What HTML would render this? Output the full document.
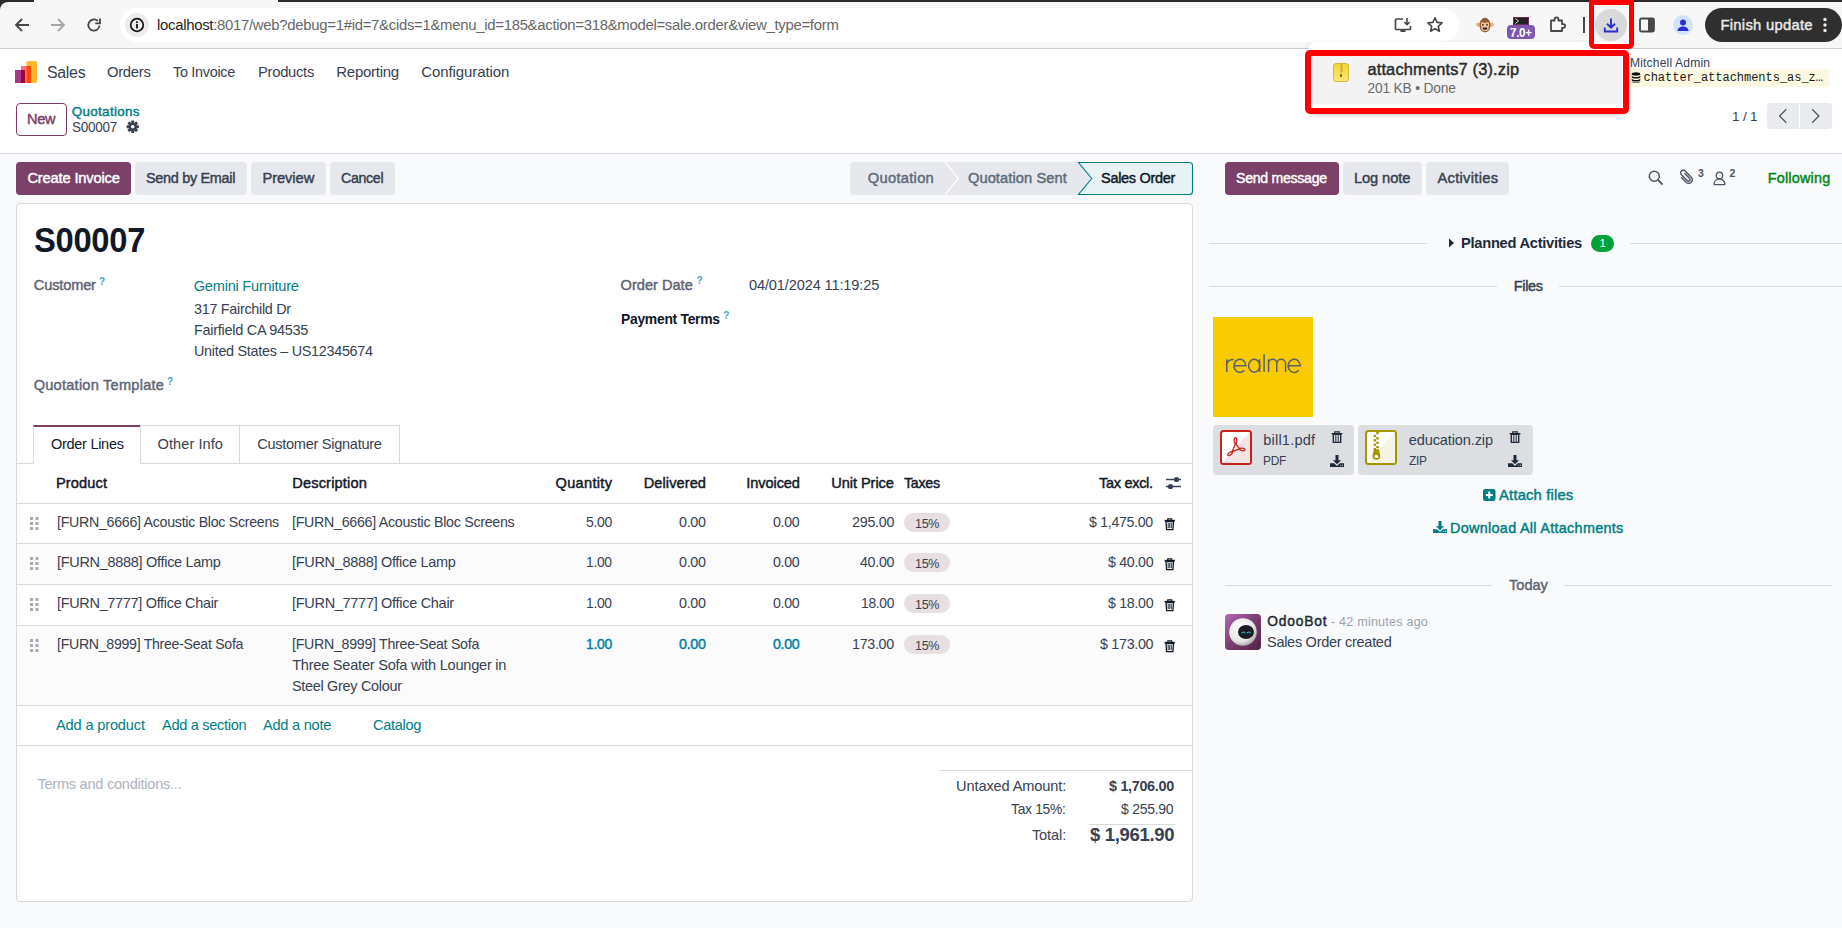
<!DOCTYPE html>
<html><head><meta charset="utf-8"><style>
html,body{margin:0;padding:0;width:1842px;height:928px;overflow:hidden;background:#f9fafb;}
body>div{position:absolute;white-space:pre;box-sizing:border-box;}
</style></head><body>
<div style="left:0px;top:0px;width:1842px;height:48px;background:#f7f7f7;"></div>
<div style="left:0px;top:0px;width:1842px;height:2px;background:#2c2c2c;"></div>
<div style="left:0px;top:0px;width:9px;height:10px;background:#2c2c2c;"></div>
<div style="left:0px;top:2px;width:40px;height:20px;background:#f7f7f7;border-top-left-radius:8px;"></div>
<div style="left:34px;top:0px;width:244px;height:2px;background:#f7f7f7;border-radius:0 0 0 0;"></div>
<div style="left:0px;top:48px;width:1842px;height:1px;background:#cfcfcf;"></div>
<div style="left:120px;top:8px;width:1339px;height:34px;background:#ffffff;border-radius:17px;"></div>
<div style="left:125px;top:13px;width:24px;height:24px;background:#ececec;border-radius:12px;"></div>
<svg style="position:absolute;left:14px;top:17px;" width="16" height="16" viewBox="0 0 16 16"><path d="M15 8H2.5M8 2L2 8l6 6" fill="none" stroke="#474747" stroke-width="1.8"/></svg>
<svg style="position:absolute;left:50px;top:17px;" width="16" height="16" viewBox="0 0 16 16"><path d="M1 8h12.5M8 2l6 6-6 6" fill="none" stroke="#a6a6a6" stroke-width="1.8"/></svg>
<svg style="position:absolute;left:86px;top:17px;" width="16" height="16" viewBox="0 0 16 16"><path d="M13.5 8.5A5.6 5.6 0 1 1 11.8 4" fill="none" stroke="#474747" stroke-width="1.8"/><path d="M14 1.5v4.8H9.2" fill="none" stroke="#474747" stroke-width="1.8"/></svg>
<svg style="position:absolute;left:129px;top:17px;" width="16" height="16" viewBox="0 0 16 16"><circle cx="8" cy="8" r="6.3" fill="none" stroke="#111" stroke-width="1.7"/><rect x="7.1" y="7" width="1.8" height="4.5" fill="#111"/><rect x="7.1" y="4.3" width="1.8" height="1.8" fill="#111"/></svg>
<div style="left:157.40px;top:17.00px;font-family:'Liberation Sans', sans-serif;font-size:15.4px;line-height:15.4px;font-weight:normal;color:#676767;letter-spacing:-0.300px;transform:scaleX(0.9679);transform-origin:0.00px 0;"><span style="color:#1f1f1f">localhost</span>:8017/web?debug=1#id=7&amp;cids=1&amp;menu_id=185&amp;action=318&amp;model=sale.order&amp;view_type=form</div>
<svg style="position:absolute;left:1394px;top:17px;" width="18" height="16" viewBox="0 0 18 16"><path d="M9 2H2.5a1 1 0 0 0-1 1v8.5a1 1 0 0 0 1 1h13a1 1 0 0 0 1-1V9" fill="none" stroke="#474747" stroke-width="1.7"/><rect x="6.5" y="13" width="5" height="2" fill="#474747"/><path d="M13 1v6.5M10.3 5l2.7 2.7L15.7 5" fill="none" stroke="#474747" stroke-width="1.6"/></svg>
<svg style="position:absolute;left:1426px;top:16px;" width="18" height="17" viewBox="0 0 18 17"><path d="M9 1.8l2.1 4.6 5 .5-3.8 3.4 1.1 4.9L9 12.6l-4.4 2.6 1.1-4.9L1.9 6.9l5-.5z" fill="none" stroke="#474747" stroke-width="1.6" stroke-linejoin="round"/></svg>
<svg style="position:absolute;left:1476px;top:17px;" width="18" height="16" viewBox="0 0 18 16"><circle cx="2.4" cy="7.6" r="2.2" fill="#e9ad7c"/><circle cx="15.6" cy="7.6" r="2.2" fill="#e9ad7c"/><path d="M9 0.8C5.5 1.5 3.6 4 3.6 8.5c0 4 2.3 6.8 5.4 6.8s5.4-2.8 5.4-6.8C14.4 4 12.5 1.5 9 .8z" fill="#8f5b3b"/><path d="M5.2 5.6c1.2-.7 2.6-.5 3.8.3 1.2-.8 2.6-1 3.8-.3.6 2.2.2 3.8-.3 4.6.6 1.6.2 3.6-3.5 3.9-3.7-.3-4.1-2.3-3.5-3.9-.5-.8-.9-2.4-.3-4.6z" fill="#f5c491"/><rect x="6.2" y="6.7" width="1.5" height="2" rx=".7" fill="#1c2340"/><rect x="10.3" y="6.7" width="1.5" height="2" rx=".7" fill="#1c2340"/><rect x="6.8" y="10.6" width="4.4" height="2" rx=".6" fill="#1c2340"/><rect x="7.4" y="11.7" width="3.2" height="0.9" fill="#b0203a"/></svg>
<div style="left:1513px;top:17px;width:16px;height:8px;background:#222;border:1px solid #6d2a5a;"></div>
<svg style="position:absolute;left:1514px;top:17px;" width="8" height="8" viewBox="0 0 8 8"><path d="M1.5 1.5l3 2.5-3 2.5" fill="none" stroke="#ddd" stroke-width="1"/></svg>
<div style="left:1507px;top:25px;width:28px;height:14px;background:#7e57b3;border-radius:4px;"></div>
<div style="left:1510.00px;top:27.00px;font-family:'Liberation Sans', sans-serif;font-size:12px;line-height:12px;font-weight:bold;color:#ffffff;letter-spacing:-0.300px;transform:scaleX(0.9654);transform-origin:0.00px 0;">7.0+</div>
<svg style="position:absolute;left:1548px;top:15px;" width="20" height="19" viewBox="0 0 20 19"><path d="M3 5.5h3.6V4.2a1.9 1.9 0 0 1 3.8 0v1.3H14v3.6h1.2a1.9 1.9 0 0 1 0 3.8H14V16H3z" fill="none" stroke="#474747" stroke-width="1.8" stroke-linejoin="round"/></svg>
<div style="left:1583px;top:17px;width:2px;height:16px;background:#474747;"></div>
<div style="left:1595px;top:9px;width:32px;height:32px;background:#d9d9d9;border-radius:16px;"></div>
<svg style="position:absolute;left:1603px;top:17px;" width="16" height="16" viewBox="0 0 16 16"><path d="M8 1.5v9M4 6.8l4 3.9 4-3.9" fill="none" stroke="#2a2ed0" stroke-width="1.9"/><path d="M1.8 10.5v4h12.4v-4" fill="none" stroke="#2a2ed0" stroke-width="1.9"/></svg>
<svg style="position:absolute;left:1639px;top:17px;" width="16" height="16" viewBox="0 0 16 16"><rect x="1" y="1.5" width="14" height="13" rx="1.5" fill="none" stroke="#474747" stroke-width="1.8"/><rect x="9" y="1.5" width="6" height="13" fill="#474747"/></svg>
<div style="left:1673px;top:15px;width:20px;height:20px;background:#d3e3fd;border-radius:10px;"></div>
<svg style="position:absolute;left:1673px;top:15px;" width="20" height="20" viewBox="0 0 20 20"><circle cx="10" cy="7.6" r="3" fill="#2a2ed0"/><path d="M4.5 16c0-3 2.5-4.6 5.5-4.6s5.5 1.6 5.5 4.6z" fill="#2a2ed0"/></svg>
<div style="left:1705px;top:8px;width:137px;height:34px;background:#2f2f2f;border-radius:17px;"></div>
<div style="left:1720.50px;top:18.00px;font-family:'Liberation Sans', sans-serif;font-size:14.8px;line-height:14.8px;font-weight:normal;color:#e8e8e8;letter-spacing:0.270px;-webkit-text-stroke:0.45px #e8e8e8;">Finish update</div>
<svg style="position:absolute;left:1821px;top:17px;" width="8" height="16" viewBox="0 0 8 16"><circle cx="4" cy="2.5" r="1.7" fill="#eee"/><circle cx="4" cy="8" r="1.7" fill="#eee"/><circle cx="4" cy="13.5" r="1.7" fill="#eee"/></svg>
<div style="left:0px;top:49px;width:1842px;height:105px;background:#ffffff;"></div>
<svg style="position:absolute;left:15px;top:60px;" width="23" height="24" viewBox="0 0 23 24"><rect x="11.4" y="1" width="10.7" height="22" rx="1.2" fill="#ffb833"/><rect x="6" y="6" width="5.4" height="17" fill="#ff6d80"/><rect x="11.4" y="6" width="4.6" height="17" fill="#ff4500"/><rect x="0" y="10" width="6" height="13" fill="#a53a8c"/><rect x="6" y="10" width="4" height="13" fill="#a5003d"/></svg>
<div style="left:47.40px;top:64.00px;font-family:'Liberation Sans', sans-serif;font-size:17.3px;line-height:17.3px;font-weight:normal;color:#374151;letter-spacing:-0.300px;transform:scaleX(0.9176);transform-origin:0.00px 0;">Sales</div>
<div style="left:107.20px;top:64.00px;font-family:'Liberation Sans', sans-serif;font-size:15px;line-height:15px;font-weight:normal;color:#374151;letter-spacing:-0.300px;transform:scaleX(0.9878);transform-origin:0.00px 0;">Orders</div>
<div style="left:172.70px;top:64.00px;font-family:'Liberation Sans', sans-serif;font-size:15px;line-height:15px;font-weight:normal;color:#374151;letter-spacing:-0.300px;transform:scaleX(0.9610);transform-origin:0.00px 0;">To Invoice</div>
<div style="left:257.70px;top:64.00px;font-family:'Liberation Sans', sans-serif;font-size:15px;line-height:15px;font-weight:normal;color:#374151;letter-spacing:-0.300px;transform:scaleX(0.9862);transform-origin:0.00px 0;">Products</div>
<div style="left:336.30px;top:64.00px;font-family:'Liberation Sans', sans-serif;font-size:15px;line-height:15px;font-weight:normal;color:#374151;letter-spacing:-0.268px;">Reporting</div>
<div style="left:421.30px;top:64.00px;font-family:'Liberation Sans', sans-serif;font-size:15px;line-height:15px;font-weight:normal;color:#374151;letter-spacing:-0.093px;">Configuration</div>
<div style="left:16px;top:103px;width:51px;height:33px;background:#ffffff;border:1px solid #7b4067;border-radius:4px;"></div>
<div style="left:27.40px;top:112.00px;font-family:'Liberation Sans', sans-serif;font-size:14.8px;line-height:14.8px;font-weight:normal;color:#7b4067;letter-spacing:-0.300px;transform:scaleX(0.9813);transform-origin:0.00px 0;-webkit-text-stroke:0.45px #7b4067;">New</div>
<div style="left:71.80px;top:105.00px;font-family:'Liberation Sans', sans-serif;font-size:13.4px;line-height:13.4px;font-weight:normal;color:#017e84;letter-spacing:0.322px;-webkit-text-stroke:0.45px #017e84;">Quotations</div>
<div style="left:71.80px;top:119.00px;font-family:'Liberation Sans', sans-serif;font-size:15px;line-height:15px;font-weight:normal;color:#374151;letter-spacing:-0.300px;transform:scaleX(0.9000);transform-origin:0.00px 0;">S00007</div>
<svg style="position:absolute;left:125.5px;top:120px;" width="13.5" height="13.5" viewBox="0 0 13.5 13.5"><g transform="translate(6.75 6.75) scale(0.93)" fill="#374151"><circle r="4.2"/><rect x="-1.6" y="-6.6" width="3.2" height="3.4" rx="0.6" transform="rotate(0)"/><rect x="-1.6" y="-6.6" width="3.2" height="3.4" rx="0.6" transform="rotate(45)"/><rect x="-1.6" y="-6.6" width="3.2" height="3.4" rx="0.6" transform="rotate(90)"/><rect x="-1.6" y="-6.6" width="3.2" height="3.4" rx="0.6" transform="rotate(135)"/><rect x="-1.6" y="-6.6" width="3.2" height="3.4" rx="0.6" transform="rotate(180)"/><rect x="-1.6" y="-6.6" width="3.2" height="3.4" rx="0.6" transform="rotate(225)"/><rect x="-1.6" y="-6.6" width="3.2" height="3.4" rx="0.6" transform="rotate(270)"/><rect x="-1.6" y="-6.6" width="3.2" height="3.4" rx="0.6" transform="rotate(315)"/><circle r="1.9" fill="#fff"/></g></svg>
<div style="left:0px;top:153px;width:1842px;height:1px;background:#d8dadd;"></div>
<div style="left:1629.90px;top:57.00px;font-family:'Liberation Sans', sans-serif;font-size:12.1px;line-height:12.1px;font-weight:normal;color:#374151;letter-spacing:0.169px;">Mitchell Admin</div>
<div style="left:1629px;top:69px;width:200px;height:18px;background:#fbf9e1;"></div>
<svg style="position:absolute;left:1631px;top:72px;" width="10" height="11" viewBox="0 0 10 11"><g fill="#111"><ellipse cx="5" cy="2" rx="4.3" ry="1.7"/><path d="M0.7 3.4c.6 1 2.3 1.5 4.3 1.5s3.7-.5 4.3-1.5V5c0 .9-1.9 1.6-4.3 1.6S0.7 5.9 0.7 5z"/><path d="M0.7 6.4c.6 1 2.3 1.5 4.3 1.5s3.7-.5 4.3-1.5V8c0 .9-1.9 1.6-4.3 1.6S0.7 8.9 0.7 8z"/><path d="M0.7 9c.6 1 2.3 1.4 4.3 1.4s3.7-.4 4.3-1.4v.3c0 .9-1.9 1.6-4.3 1.6S0.7 10.2 0.7 9.3z"/></g></svg>
<div style="left:1643.50px;top:72.00px;font-family:'Liberation Mono', monospace;font-size:12px;line-height:12px;font-weight:normal;color:#1a1a1a;letter-spacing:-0.022px;">chatter_attachments_as_z…</div>
<div style="left:1732.00px;top:110.00px;font-family:'Liberation Sans', sans-serif;font-size:13.4px;line-height:13.4px;font-weight:normal;color:#374151;letter-spacing:-0.144px;">1 / 1</div>
<div style="left:1767px;top:103px;width:32px;height:26px;background:#e9ebee;border-radius:4px 0 0 4px;"></div>
<div style="left:1800px;top:103px;width:32px;height:26px;background:#e9ebee;border-radius:0 4px 4px 0;"></div>
<svg style="position:absolute;left:1777px;top:108px;" width="12" height="16" viewBox="0 0 12 16"><path d="M9.3 1.2L2.6 8l6.7 6.8" fill="none" stroke="#4b5563" stroke-width="1.25"/></svg>
<svg style="position:absolute;left:1810px;top:108px;" width="12" height="16" viewBox="0 0 12 16"><path d="M2.2 1.2L8.9 8l-6.7 6.8" fill="none" stroke="#4b5563" stroke-width="1.25"/></svg>
<div style="left:1308px;top:42px;width:320px;height:71px;background:#ffffff;border-radius:8px;box-shadow:0 2px 5px rgba(0,0,0,0.22);"></div>
<div style="left:1309px;top:54px;width:316px;height:50px;background:#f3f3f3;"></div>
<svg style="position:absolute;left:1333px;top:63px;" width="16" height="19" viewBox="0 0 16 19"><defs><linearGradient id="zg" x1="0" y1="0" x2="0" y2="1"><stop offset="0" stop-color="#f5d531"/><stop offset="1" stop-color="#fde777"/></linearGradient></defs><rect x="0.5" y="0.5" width="15" height="18" rx="2.5" fill="url(#zg)" stroke="#c9a92a" stroke-width="0.8"/><path d="M8 1.5l1 1-1 1 1 1-1 1 1 1-1 1 1 1-1 1" fill="none" stroke="#6b5a10" stroke-width="0.7"/><rect x="7.2" y="11" width="1.6" height="3" fill="#6b5a10"/></svg>
<div style="left:1367.40px;top:61.00px;font-family:'Liberation Sans', sans-serif;font-size:16.4px;line-height:16.4px;font-weight:normal;color:#2b2b2b;letter-spacing:0.169px;-webkit-text-stroke:0.45px #2b2b2b;">attachments7 (3).zip</div>
<div style="left:1367.40px;top:82.00px;font-family:'Liberation Sans', sans-serif;font-size:13.8px;line-height:13.8px;font-weight:normal;color:#6b6b6b;letter-spacing:-0.180px;">201 KB • Done</div>
<div style="left:1305px;top:50px;width:324px;height:64px;background:transparent;border:6px solid #ff0000;border-radius:5px;"></div>
<div style="left:1589px;top:0px;width:45px;height:49px;background:transparent;border:5.5px solid #ff0000;border-radius:0 0 5px 5px;"></div>
<div style="left:16px;top:162px;width:115px;height:33px;background:#7b4067;border-radius:4px;"></div>
<div style="left:27.40px;top:171.00px;font-family:'Liberation Sans', sans-serif;font-size:14.7px;line-height:14.7px;font-weight:normal;color:#ffffff;letter-spacing:-0.168px;-webkit-text-stroke:0.45px #ffffff;">Create Invoice</div>
<div style="left:135px;top:162px;width:112px;height:33px;background:#e6e8ed;border-radius:4px;"></div>
<div style="left:146.40px;top:171.00px;font-family:'Liberation Sans', sans-serif;font-size:14.7px;line-height:14.7px;font-weight:normal;color:#374151;letter-spacing:-0.300px;transform:scaleX(0.9815);transform-origin:0.00px 0;-webkit-text-stroke:0.45px #374151;">Send by Email</div>
<div style="left:251px;top:162px;width:75px;height:33px;background:#e6e8ed;border-radius:4px;"></div>
<div style="left:262.40px;top:171.00px;font-family:'Liberation Sans', sans-serif;font-size:14.7px;line-height:14.7px;font-weight:normal;color:#374151;letter-spacing:-0.055px;-webkit-text-stroke:0.45px #374151;">Preview</div>
<div style="left:330px;top:162px;width:65px;height:33px;background:#e6e8ed;border-radius:4px;"></div>
<div style="left:341.10px;top:171.00px;font-family:'Liberation Sans', sans-serif;font-size:14.7px;line-height:14.7px;font-weight:normal;color:#374151;letter-spacing:-0.300px;transform:scaleX(0.9625);transform-origin:0.00px 0;-webkit-text-stroke:0.45px #374151;">Cancel</div>
<div style="left:850px;top:162px;width:240px;height:33px;background:#e6e8ed;border-radius:4px 0 0 4px;"></div>
<svg style="position:absolute;left:940px;top:162px;" width="24" height="33" viewBox="0 0 24 33"><path d="M5 0L18.4 16.5L5 33" fill="none" stroke="#ffffff" stroke-width="1.2"/></svg>
<svg style="position:absolute;left:1077px;top:161px;" width="117" height="35" viewBox="0 0 117 35"><path d="M1.5 1.5H112.5a3 3 0 0 1 3 3V30.5a3 3 0 0 1-3 3H1.5L14.7 17.5Z" fill="#e6f2f3" stroke="#017e84" stroke-width="1.1"/></svg>
<div style="left:867.80px;top:171.00px;font-family:'Liberation Sans', sans-serif;font-size:14.7px;line-height:14.7px;font-weight:normal;color:#5f6b7a;letter-spacing:0.283px;-webkit-text-stroke:0.45px #5f6b7a;">Quotation</div>
<div style="left:967.90px;top:171.00px;font-family:'Liberation Sans', sans-serif;font-size:14.7px;line-height:14.7px;font-weight:normal;color:#5f6b7a;letter-spacing:0.072px;-webkit-text-stroke:0.45px #5f6b7a;">Quotation Sent</div>
<div style="left:1100.60px;top:171.00px;font-family:'Liberation Sans', sans-serif;font-size:14.7px;line-height:14.7px;font-weight:normal;color:#111827;letter-spacing:-0.300px;transform:scaleX(0.9877);transform-origin:0.00px 0;-webkit-text-stroke:0.45px #111827;">Sales Order</div>
<div style="left:16px;top:203px;width:1177px;height:699px;background:#ffffff;border:1px solid #d8dadd;border-radius:4px;"></div>
<div style="left:33.80px;top:223.00px;font-family:'Liberation Sans', sans-serif;font-size:34.4px;line-height:34.4px;font-weight:bold;color:#111827;letter-spacing:-0.300px;transform:scaleX(0.9512);transform-origin:0.00px 0;">S00007</div>
<div style="left:33.80px;top:278.00px;font-family:'Liberation Sans', sans-serif;font-size:14.6px;line-height:14.6px;font-weight:normal;color:#5f6574;letter-spacing:-0.156px;-webkit-text-stroke:0.45px #5f6574;">Customer</div>
<div style="left:99.00px;top:277.00px;font-family:'Liberation Sans', sans-serif;font-size:10px;line-height:10px;font-weight:bold;color:#48a2c4;letter-spacing:0.000px;">?</div>
<div style="left:193.70px;top:279.00px;font-family:'Liberation Sans', sans-serif;font-size:14.6px;line-height:14.6px;font-weight:normal;color:#017e84;letter-spacing:-0.228px;">Gemini Furniture</div>
<div style="left:193.70px;top:302.00px;font-family:'Liberation Sans', sans-serif;font-size:14.6px;line-height:14.6px;font-weight:normal;color:#374151;letter-spacing:-0.300px;transform:scaleX(0.9863);transform-origin:0.00px 0;">317 Fairchild Dr</div>
<div style="left:193.70px;top:323.00px;font-family:'Liberation Sans', sans-serif;font-size:14.6px;line-height:14.6px;font-weight:normal;color:#374151;letter-spacing:-0.300px;transform:scaleX(0.9955);transform-origin:0.00px 0;">Fairfield CA 94535</div>
<div style="left:193.70px;top:344.00px;font-family:'Liberation Sans', sans-serif;font-size:14.6px;line-height:14.6px;font-weight:normal;color:#374151;letter-spacing:-0.300px;transform:scaleX(0.9861);transform-origin:0.00px 0;">United States – US12345674</div>
<div style="left:620.60px;top:278.00px;font-family:'Liberation Sans', sans-serif;font-size:14.6px;line-height:14.6px;font-weight:normal;color:#5f6574;letter-spacing:-0.001px;-webkit-text-stroke:0.45px #5f6574;">Order Date</div>
<div style="left:696.50px;top:276.00px;font-family:'Liberation Sans', sans-serif;font-size:10px;line-height:10px;font-weight:bold;color:#48a2c4;letter-spacing:0.000px;">?</div>
<div style="left:749.00px;top:278.00px;font-family:'Liberation Sans', sans-serif;font-size:14.6px;line-height:14.6px;font-weight:normal;color:#374151;letter-spacing:-0.143px;">04/01/2024 11:19:25</div>
<div style="left:620.60px;top:312.00px;font-family:'Liberation Sans', sans-serif;font-size:14.6px;line-height:14.6px;font-weight:bold;color:#111827;letter-spacing:-0.300px;transform:scaleX(0.9523);transform-origin:0.00px 0;">Payment Terms</div>
<div style="left:723.20px;top:311.00px;font-family:'Liberation Sans', sans-serif;font-size:10px;line-height:10px;font-weight:bold;color:#48a2c4;letter-spacing:0.000px;">?</div>
<div style="left:33.70px;top:378.00px;font-family:'Liberation Sans', sans-serif;font-size:14.6px;line-height:14.6px;font-weight:normal;color:#5f6574;letter-spacing:0.232px;-webkit-text-stroke:0.45px #5f6574;">Quotation Template</div>
<div style="left:167.10px;top:377.00px;font-family:'Liberation Sans', sans-serif;font-size:10px;line-height:10px;font-weight:bold;color:#48a2c4;letter-spacing:0.000px;">?</div>
<div style="left:17px;top:463px;width:1175px;height:1px;background:#d8dadd;"></div>
<div style="left:33px;top:425px;width:108px;height:39px;background:#ffffff;border:1px solid #d8dadd;border-top:2px solid #7b4067;border-bottom:none;"></div>
<div style="left:140px;top:425px;width:100px;height:39px;background:#ffffff;border:1px solid #d8dadd;"></div>
<div style="left:239px;top:425px;width:161px;height:39px;background:#ffffff;border:1px solid #d8dadd;"></div>
<div style="left:50.60px;top:437.00px;font-family:'Liberation Sans', sans-serif;font-size:14.6px;line-height:14.6px;font-weight:normal;color:#111827;letter-spacing:-0.300px;transform:scaleX(0.9961);transform-origin:0.00px 0;">Order Lines</div>
<div style="left:157.60px;top:437.00px;font-family:'Liberation Sans', sans-serif;font-size:14.6px;line-height:14.6px;font-weight:normal;color:#374151;letter-spacing:0.042px;">Other Info</div>
<div style="left:257.20px;top:437.00px;font-family:'Liberation Sans', sans-serif;font-size:14.6px;line-height:14.6px;font-weight:normal;color:#374151;letter-spacing:-0.296px;">Customer Signature</div>
<div style="left:56.00px;top:476.00px;font-family:'Liberation Sans', sans-serif;font-size:14.6px;line-height:14.6px;font-weight:normal;color:#111827;letter-spacing:0.115px;-webkit-text-stroke:0.45px #111827;">Product</div>
<div style="left:292.20px;top:476.00px;font-family:'Liberation Sans', sans-serif;font-size:14.6px;line-height:14.6px;font-weight:normal;color:#111827;letter-spacing:0.167px;-webkit-text-stroke:0.45px #111827;">Description</div>
<div style="left:555.50px;top:476.00px;font-family:'Liberation Sans', sans-serif;font-size:14.6px;line-height:14.6px;font-weight:normal;color:#111827;letter-spacing:0.304px;-webkit-text-stroke:0.45px #111827;">Quantity</div>
<div style="left:643.70px;top:476.00px;font-family:'Liberation Sans', sans-serif;font-size:14.6px;line-height:14.6px;font-weight:normal;color:#111827;letter-spacing:0.079px;-webkit-text-stroke:0.45px #111827;">Delivered</div>
<div style="left:746.30px;top:476.00px;font-family:'Liberation Sans', sans-serif;font-size:14.6px;line-height:14.6px;font-weight:normal;color:#111827;letter-spacing:-0.098px;-webkit-text-stroke:0.45px #111827;">Invoiced</div>
<div style="left:831.20px;top:476.00px;font-family:'Liberation Sans', sans-serif;font-size:14.6px;line-height:14.6px;font-weight:normal;color:#111827;letter-spacing:-0.055px;-webkit-text-stroke:0.45px #111827;">Unit Price</div>
<div style="left:904.10px;top:476.00px;font-family:'Liberation Sans', sans-serif;font-size:14.6px;line-height:14.6px;font-weight:normal;color:#111827;letter-spacing:-0.300px;transform:scaleX(0.9747);transform-origin:0.00px 0;-webkit-text-stroke:0.45px #111827;">Taxes</div>
<div style="left:1099.10px;top:476.00px;font-family:'Liberation Sans', sans-serif;font-size:14.6px;line-height:14.6px;font-weight:normal;color:#111827;letter-spacing:-0.300px;transform:scaleX(0.9946);transform-origin:0.00px 0;-webkit-text-stroke:0.45px #111827;">Tax excl.</div>
<svg style="position:absolute;left:1165px;top:476px;" width="17" height="14" viewBox="0 0 17 14"><path d="M1 3.5h15M1 10.5h15" stroke="#374151" stroke-width="1.5"/><circle cx="11.5" cy="3.5" r="2.6" fill="#374151"/><circle cx="5.5" cy="10.5" r="2.6" fill="#374151"/></svg>
<div style="left:17px;top:503px;width:1175px;height:1px;background:#d8dadd;"></div>
<div style="left:17px;top:504px;width:1175px;height:39px;background:#ffffff;"></div>
<div style="left:17px;top:543px;width:1175px;height:1px;background:#d8dadd;"></div>
<svg style="position:absolute;left:30px;top:517px;" width="9" height="13" viewBox="0 0 9 13"><rect x="0" y="0" width="3" height="3" fill="#a5abb5"/><rect x="0" y="5" width="3" height="3" fill="#a5abb5"/><rect x="0" y="10" width="3" height="3" fill="#a5abb5"/><rect x="5.5" y="0" width="3" height="3" fill="#a5abb5"/><rect x="5.5" y="5" width="3" height="3" fill="#a5abb5"/><rect x="5.5" y="10" width="3" height="3" fill="#a5abb5"/></svg>
<div style="left:56.50px;top:515.00px;font-family:'Liberation Sans', sans-serif;font-size:14.6px;line-height:14.6px;font-weight:normal;color:#374151;letter-spacing:-0.300px;transform:scaleX(0.9743);transform-origin:0.00px 0;">[FURN_6666] Acoustic Bloc Screens</div>
<div style="left:292.20px;top:515.00px;font-family:'Liberation Sans', sans-serif;font-size:14.6px;line-height:14.6px;font-weight:normal;color:#374151;letter-spacing:-0.300px;transform:scaleX(0.9765);transform-origin:0.00px 0;">[FURN_6666] Acoustic Bloc Screens</div>
<div style="left:585.60px;top:515.00px;font-family:'Liberation Sans', sans-serif;font-size:14.6px;line-height:14.6px;font-weight:normal;color:#374151;letter-spacing:-0.300px;transform:scaleX(0.9596);transform-origin:0.00px 0;">5.00</div>
<div style="left:679.00px;top:515.00px;font-family:'Liberation Sans', sans-serif;font-size:14.6px;line-height:14.6px;font-weight:normal;color:#374151;letter-spacing:-0.300px;transform:scaleX(0.9814);transform-origin:0.00px 0;">0.00</div>
<div style="left:773.30px;top:515.00px;font-family:'Liberation Sans', sans-serif;font-size:14.6px;line-height:14.6px;font-weight:normal;color:#374151;letter-spacing:-0.300px;transform:scaleX(0.9705);transform-origin:0.00px 0;">0.00</div>
<div style="left:851.50px;top:515.00px;font-family:'Liberation Sans', sans-serif;font-size:14.6px;line-height:14.6px;font-weight:normal;color:#374151;letter-spacing:-0.300px;transform:scaleX(0.9847);transform-origin:0.00px 0;">295.00</div>
<div style="left:1089.40px;top:515.00px;font-family:'Liberation Sans', sans-serif;font-size:14.6px;line-height:14.6px;font-weight:normal;color:#374151;letter-spacing:-0.300px;transform:scaleX(0.9681);transform-origin:0.00px 0;">$ 1,475.00</div>
<div style="left:904px;top:513px;width:46px;height:19px;background:#e8dfe0;border-radius:10px;"></div>
<div style="left:915.00px;top:517.00px;font-family:'Liberation Sans', sans-serif;font-size:13.6px;line-height:13.6px;font-weight:normal;color:#374151;letter-spacing:-0.300px;transform:scaleX(0.9206);transform-origin:0.00px 0;">15%</div>
<svg style="position:absolute;left:1164px;top:518px;" width="12" height="13" viewBox="0 0 12 13"><path d="M0.6 2.6h10.3" stroke="#111827" stroke-width="1.5"/><path d="M3.8 2.4V0.9h3.9v1.5" fill="none" stroke="#111827" stroke-width="1.2"/><path d="M2 3.6h7.5l-.6 8.1H2.6z" fill="none" stroke="#111827" stroke-width="1.3"/><path d="M4.2 5v5.2M5.75 5v5.2M7.3 5v5.2" stroke="#111827" stroke-width="0.9"/></svg>
<div style="left:17px;top:544px;width:1175px;height:40px;background:#fbfbfb;"></div>
<div style="left:17px;top:584px;width:1175px;height:1px;background:#d8dadd;"></div>
<svg style="position:absolute;left:30px;top:557.4px;" width="9" height="13" viewBox="0 0 9 13"><rect x="0" y="0" width="3" height="3" fill="#a5abb5"/><rect x="0" y="5" width="3" height="3" fill="#a5abb5"/><rect x="0" y="10" width="3" height="3" fill="#a5abb5"/><rect x="5.5" y="0" width="3" height="3" fill="#a5abb5"/><rect x="5.5" y="5" width="3" height="3" fill="#a5abb5"/><rect x="5.5" y="10" width="3" height="3" fill="#a5abb5"/></svg>
<div style="left:56.50px;top:555.00px;font-family:'Liberation Sans', sans-serif;font-size:14.6px;line-height:14.6px;font-weight:normal;color:#374151;letter-spacing:-0.300px;transform:scaleX(0.9929);transform-origin:0.00px 0;">[FURN_8888] Office Lamp</div>
<div style="left:292.20px;top:555.00px;font-family:'Liberation Sans', sans-serif;font-size:14.6px;line-height:14.6px;font-weight:normal;color:#374151;letter-spacing:-0.300px;transform:scaleX(0.9917);transform-origin:0.00px 0;">[FURN_8888] Office Lamp</div>
<div style="left:586.00px;top:555.00px;font-family:'Liberation Sans', sans-serif;font-size:14.6px;line-height:14.6px;font-weight:normal;color:#374151;letter-spacing:-0.300px;transform:scaleX(0.9451);transform-origin:0.00px 0;">1.00</div>
<div style="left:679.00px;top:555.00px;font-family:'Liberation Sans', sans-serif;font-size:14.6px;line-height:14.6px;font-weight:normal;color:#374151;letter-spacing:-0.300px;transform:scaleX(0.9814);transform-origin:0.00px 0;">0.00</div>
<div style="left:773.30px;top:555.00px;font-family:'Liberation Sans', sans-serif;font-size:14.6px;line-height:14.6px;font-weight:normal;color:#374151;letter-spacing:-0.300px;transform:scaleX(0.9705);transform-origin:0.00px 0;">0.00</div>
<div style="left:859.60px;top:555.00px;font-family:'Liberation Sans', sans-serif;font-size:14.6px;line-height:14.6px;font-weight:normal;color:#374151;letter-spacing:-0.300px;transform:scaleX(0.9737);transform-origin:0.00px 0;">40.00</div>
<div style="left:1108.00px;top:555.00px;font-family:'Liberation Sans', sans-serif;font-size:14.6px;line-height:14.6px;font-weight:normal;color:#374151;letter-spacing:-0.300px;transform:scaleX(0.9722);transform-origin:0.00px 0;">$ 40.00</div>
<div style="left:904px;top:553.4px;width:46px;height:19px;background:#e8dfe0;border-radius:10px;"></div>
<div style="left:915.00px;top:557.00px;font-family:'Liberation Sans', sans-serif;font-size:13.6px;line-height:13.6px;font-weight:normal;color:#374151;letter-spacing:-0.300px;transform:scaleX(0.9206);transform-origin:0.00px 0;">15%</div>
<svg style="position:absolute;left:1164px;top:558.4px;" width="12" height="13" viewBox="0 0 12 13"><path d="M0.6 2.6h10.3" stroke="#111827" stroke-width="1.5"/><path d="M3.8 2.4V0.9h3.9v1.5" fill="none" stroke="#111827" stroke-width="1.2"/><path d="M2 3.6h7.5l-.6 8.1H2.6z" fill="none" stroke="#111827" stroke-width="1.3"/><path d="M4.2 5v5.2M5.75 5v5.2M7.3 5v5.2" stroke="#111827" stroke-width="0.9"/></svg>
<div style="left:17px;top:585px;width:1175px;height:40px;background:#ffffff;"></div>
<div style="left:17px;top:625px;width:1175px;height:1px;background:#d8dadd;"></div>
<svg style="position:absolute;left:30px;top:598px;" width="9" height="13" viewBox="0 0 9 13"><rect x="0" y="0" width="3" height="3" fill="#a5abb5"/><rect x="0" y="5" width="3" height="3" fill="#a5abb5"/><rect x="0" y="10" width="3" height="3" fill="#a5abb5"/><rect x="5.5" y="0" width="3" height="3" fill="#a5abb5"/><rect x="5.5" y="5" width="3" height="3" fill="#a5abb5"/><rect x="5.5" y="10" width="3" height="3" fill="#a5abb5"/></svg>
<div style="left:56.50px;top:596.00px;font-family:'Liberation Sans', sans-serif;font-size:14.6px;line-height:14.6px;font-weight:normal;color:#374151;letter-spacing:-0.300px;transform:scaleX(0.9894);transform-origin:0.00px 0;">[FURN_7777] Office Chair</div>
<div style="left:292.20px;top:596.00px;font-family:'Liberation Sans', sans-serif;font-size:14.6px;line-height:14.6px;font-weight:normal;color:#374151;letter-spacing:-0.300px;transform:scaleX(0.9937);transform-origin:0.00px 0;">[FURN_7777] Office Chair</div>
<div style="left:586.00px;top:596.00px;font-family:'Liberation Sans', sans-serif;font-size:14.6px;line-height:14.6px;font-weight:normal;color:#374151;letter-spacing:-0.300px;transform:scaleX(0.9451);transform-origin:0.00px 0;">1.00</div>
<div style="left:679.00px;top:596.00px;font-family:'Liberation Sans', sans-serif;font-size:14.6px;line-height:14.6px;font-weight:normal;color:#374151;letter-spacing:-0.300px;transform:scaleX(0.9814);transform-origin:0.00px 0;">0.00</div>
<div style="left:773.30px;top:596.00px;font-family:'Liberation Sans', sans-serif;font-size:14.6px;line-height:14.6px;font-weight:normal;color:#374151;letter-spacing:-0.300px;transform:scaleX(0.9705);transform-origin:0.00px 0;">0.00</div>
<div style="left:860.60px;top:596.00px;font-family:'Liberation Sans', sans-serif;font-size:14.6px;line-height:14.6px;font-weight:normal;color:#374151;letter-spacing:-0.300px;transform:scaleX(0.9454);transform-origin:0.00px 0;">18.00</div>
<div style="left:1108.00px;top:596.00px;font-family:'Liberation Sans', sans-serif;font-size:14.6px;line-height:14.6px;font-weight:normal;color:#374151;letter-spacing:-0.300px;transform:scaleX(0.9722);transform-origin:0.00px 0;">$ 18.00</div>
<div style="left:904px;top:594px;width:46px;height:19px;background:#e8dfe0;border-radius:10px;"></div>
<div style="left:915.00px;top:598.00px;font-family:'Liberation Sans', sans-serif;font-size:13.6px;line-height:13.6px;font-weight:normal;color:#374151;letter-spacing:-0.300px;transform:scaleX(0.9206);transform-origin:0.00px 0;">15%</div>
<svg style="position:absolute;left:1164px;top:599px;" width="12" height="13" viewBox="0 0 12 13"><path d="M0.6 2.6h10.3" stroke="#111827" stroke-width="1.5"/><path d="M3.8 2.4V0.9h3.9v1.5" fill="none" stroke="#111827" stroke-width="1.2"/><path d="M2 3.6h7.5l-.6 8.1H2.6z" fill="none" stroke="#111827" stroke-width="1.3"/><path d="M4.2 5v5.2M5.75 5v5.2M7.3 5v5.2" stroke="#111827" stroke-width="0.9"/></svg>
<div style="left:17px;top:626px;width:1175px;height:79px;background:#fbfbfb;"></div>
<div style="left:17px;top:705px;width:1175px;height:1px;background:#d8dadd;"></div>
<svg style="position:absolute;left:30px;top:639px;" width="9" height="13" viewBox="0 0 9 13"><rect x="0" y="0" width="3" height="3" fill="#a5abb5"/><rect x="0" y="5" width="3" height="3" fill="#a5abb5"/><rect x="0" y="10" width="3" height="3" fill="#a5abb5"/><rect x="5.5" y="0" width="3" height="3" fill="#a5abb5"/><rect x="5.5" y="5" width="3" height="3" fill="#a5abb5"/><rect x="5.5" y="10" width="3" height="3" fill="#a5abb5"/></svg>
<div style="left:56.50px;top:637.00px;font-family:'Liberation Sans', sans-serif;font-size:14.6px;line-height:14.6px;font-weight:normal;color:#374151;letter-spacing:-0.300px;transform:scaleX(0.9694);transform-origin:0.00px 0;">[FURN_8999] Three-Seat Sofa</div>
<div style="left:292.20px;top:637.00px;font-family:'Liberation Sans', sans-serif;font-size:14.6px;line-height:14.6px;font-weight:normal;color:#374151;letter-spacing:-0.300px;transform:scaleX(0.9740);transform-origin:0.00px 0;">[FURN_8999] Three-Seat Sofa</div>
<div style="left:292.20px;top:658.00px;font-family:'Liberation Sans', sans-serif;font-size:14.6px;line-height:14.6px;font-weight:normal;color:#374151;letter-spacing:-0.250px;">Three Seater Sofa with Lounger in</div>
<div style="left:292.20px;top:679.00px;font-family:'Liberation Sans', sans-serif;font-size:14.6px;line-height:14.6px;font-weight:normal;color:#374151;letter-spacing:-0.300px;transform:scaleX(0.9888);transform-origin:0.00px 0;">Steel Grey Colour</div>
<div style="left:585.90px;top:637.00px;font-family:'Liberation Sans', sans-serif;font-size:14.6px;line-height:14.6px;font-weight:normal;color:#0180a5;letter-spacing:-0.300px;transform:scaleX(0.9487);transform-origin:0.00px 0;-webkit-text-stroke:0.45px #0180a5;">1.00</div>
<div style="left:679.00px;top:637.00px;font-family:'Liberation Sans', sans-serif;font-size:14.6px;line-height:14.6px;font-weight:normal;color:#0180a5;letter-spacing:-0.300px;transform:scaleX(0.9814);transform-origin:0.00px 0;-webkit-text-stroke:0.45px #0180a5;">0.00</div>
<div style="left:773.30px;top:637.00px;font-family:'Liberation Sans', sans-serif;font-size:14.6px;line-height:14.6px;font-weight:normal;color:#0180a5;letter-spacing:-0.300px;transform:scaleX(0.9705);transform-origin:0.00px 0;-webkit-text-stroke:0.45px #0180a5;">0.00</div>
<div style="left:851.80px;top:637.00px;font-family:'Liberation Sans', sans-serif;font-size:14.6px;line-height:14.6px;font-weight:normal;color:#374151;letter-spacing:-0.300px;transform:scaleX(0.9777);transform-origin:0.00px 0;">173.00</div>
<div style="left:1100.00px;top:637.00px;font-family:'Liberation Sans', sans-serif;font-size:14.6px;line-height:14.6px;font-weight:normal;color:#374151;letter-spacing:-0.300px;transform:scaleX(0.9792);transform-origin:0.00px 0;">$ 173.00</div>
<div style="left:904px;top:635px;width:46px;height:19px;background:#e8dfe0;border-radius:10px;"></div>
<div style="left:915.00px;top:639.00px;font-family:'Liberation Sans', sans-serif;font-size:13.6px;line-height:13.6px;font-weight:normal;color:#374151;letter-spacing:-0.300px;transform:scaleX(0.9206);transform-origin:0.00px 0;">15%</div>
<svg style="position:absolute;left:1164px;top:640px;" width="12" height="13" viewBox="0 0 12 13"><path d="M0.6 2.6h10.3" stroke="#111827" stroke-width="1.5"/><path d="M3.8 2.4V0.9h3.9v1.5" fill="none" stroke="#111827" stroke-width="1.2"/><path d="M2 3.6h7.5l-.6 8.1H2.6z" fill="none" stroke="#111827" stroke-width="1.3"/><path d="M4.2 5v5.2M5.75 5v5.2M7.3 5v5.2" stroke="#111827" stroke-width="0.9"/></svg>
<div style="left:56.00px;top:718.00px;font-family:'Liberation Sans', sans-serif;font-size:14.6px;line-height:14.6px;font-weight:normal;color:#017e84;letter-spacing:-0.160px;">Add a product</div>
<div style="left:161.90px;top:718.00px;font-family:'Liberation Sans', sans-serif;font-size:14.6px;line-height:14.6px;font-weight:normal;color:#017e84;letter-spacing:-0.300px;transform:scaleX(0.9979);transform-origin:0.00px 0;">Add a section</div>
<div style="left:263.00px;top:718.00px;font-family:'Liberation Sans', sans-serif;font-size:14.6px;line-height:14.6px;font-weight:normal;color:#017e84;letter-spacing:-0.247px;">Add a note</div>
<div style="left:373.20px;top:718.00px;font-family:'Liberation Sans', sans-serif;font-size:14.6px;line-height:14.6px;font-weight:normal;color:#017e84;letter-spacing:-0.300px;transform:scaleX(0.9995);transform-origin:0.00px 0;">Catalog</div>
<div style="left:17px;top:745px;width:1175px;height:1px;background:#d8dadd;"></div>
<div style="left:37.40px;top:777.00px;font-family:'Liberation Sans', sans-serif;font-size:14.6px;line-height:14.6px;font-weight:normal;color:#aeb4bd;letter-spacing:-0.261px;">Terms and conditions...</div>
<div style="left:939px;top:770px;width:253px;height:1px;background:#d8dadd;"></div>
<div style="left:956.10px;top:779.00px;font-family:'Liberation Sans', sans-serif;font-size:14.6px;line-height:14.6px;font-weight:normal;color:#374151;letter-spacing:-0.128px;">Untaxed Amount:</div>
<div style="left:1108.90px;top:779.00px;font-family:'Liberation Sans', sans-serif;font-size:14.6px;line-height:14.6px;font-weight:bold;color:#374151;letter-spacing:-0.300px;transform:scaleX(0.9832);transform-origin:0.00px 0;">$ 1,706.00</div>
<div style="left:1011.40px;top:802.00px;font-family:'Liberation Sans', sans-serif;font-size:14.6px;line-height:14.6px;font-weight:normal;color:#374151;letter-spacing:-0.300px;transform:scaleX(0.9474);transform-origin:0.00px 0;">Tax 15%:</div>
<div style="left:1121.40px;top:802.00px;font-family:'Liberation Sans', sans-serif;font-size:14.6px;line-height:14.6px;font-weight:normal;color:#374151;letter-spacing:-0.300px;transform:scaleX(0.9628);transform-origin:0.00px 0;">$ 255.90</div>
<div style="left:1089px;top:824px;width:86px;height:1px;background:#d8dadd;"></div>
<div style="left:1031.90px;top:828.00px;font-family:'Liberation Sans', sans-serif;font-size:14.6px;line-height:14.6px;font-weight:normal;color:#374151;letter-spacing:-0.099px;">Total:</div>
<div style="left:1089.50px;top:826.00px;font-family:'Liberation Sans', sans-serif;font-size:18.6px;line-height:18.6px;font-weight:bold;color:#374151;letter-spacing:-0.300px;transform:scaleX(0.9927);transform-origin:0.00px 0;">$ 1,961.90</div>
<div style="left:1225px;top:162px;width:114px;height:33px;background:#7b4067;border-radius:4px;"></div>
<div style="left:1235.80px;top:171.00px;font-family:'Liberation Sans', sans-serif;font-size:14.7px;line-height:14.7px;font-weight:normal;color:#ffffff;letter-spacing:-0.300px;transform:scaleX(0.9624);transform-origin:0.00px 0;-webkit-text-stroke:0.45px #ffffff;">Send message</div>
<div style="left:1343px;top:162px;width:79px;height:33px;background:#e6e8ed;border-radius:4px;"></div>
<div style="left:1354.00px;top:171.00px;font-family:'Liberation Sans', sans-serif;font-size:14.7px;line-height:14.7px;font-weight:normal;color:#374151;letter-spacing:-0.118px;-webkit-text-stroke:0.45px #374151;">Log note</div>
<div style="left:1426px;top:162px;width:83px;height:33px;background:#e6e8ed;border-radius:4px;"></div>
<div style="left:1437.40px;top:171.00px;font-family:'Liberation Sans', sans-serif;font-size:14.7px;line-height:14.7px;font-weight:normal;color:#374151;letter-spacing:0.312px;-webkit-text-stroke:0.45px #374151;">Activities</div>
<svg style="position:absolute;left:1648px;top:170px;" width="16" height="16" viewBox="0 0 16 16"><circle cx="6.3" cy="6.3" r="5" fill="none" stroke="#4b5563" stroke-width="1.5"/><path d="M10 10l4.5 4.5" stroke="#4b5563" stroke-width="1.8"/></svg>
<svg style="position:absolute;left:1677px;top:168px;" width="18" height="18" viewBox="0 0 18 18"><g transform="rotate(-45 9 9)"><path d="M9.6 5.5V12.3a1.6 1.6 0 0 1-3.2 0V3.8a2.6 2.6 0 0 1 5.2 0V12.6a3.6 3.6 0 0 1-7.2 0V6" fill="none" stroke="#4b5563" stroke-width="1.4" stroke-linecap="round" transform="translate(1 0.3)"/></g></svg>
<div style="left:1697.90px;top:168.00px;font-family:'Liberation Sans', sans-serif;font-size:10.5px;line-height:10.5px;font-weight:bold;color:#4b5563;letter-spacing:0.000px;">3</div>
<svg style="position:absolute;left:1712px;top:171px;" width="15" height="15" viewBox="0 0 15 15"><circle cx="7.5" cy="4.4" r="3.2" fill="none" stroke="#4b5563" stroke-width="1.3"/><path d="M2.2 13.6v-1.2c0-2.4 2.3-4.2 5.3-4.2s5.3 1.8 5.3 4.2v1.2z" fill="none" stroke="#4b5563" stroke-width="1.3" stroke-linejoin="round"/></svg>
<div style="left:1729.50px;top:168.00px;font-family:'Liberation Sans', sans-serif;font-size:10.5px;line-height:10.5px;font-weight:bold;color:#4b5563;letter-spacing:0.000px;">2</div>
<div style="left:1767.70px;top:171.00px;font-family:'Liberation Sans', sans-serif;font-size:14.4px;line-height:14.4px;font-weight:normal;color:#008818;letter-spacing:0.209px;-webkit-text-stroke:0.45px #008818;">Following</div>
<div style="left:1209px;top:243px;width:218px;height:1px;background:#d8dadd;"></div>
<div style="left:1630px;top:243px;width:212px;height:1px;background:#d8dadd;"></div>
<svg style="position:absolute;left:1448px;top:238px;" width="7" height="10" viewBox="0 0 7 10"><path d="M1 0.5L6 5 1 9.5z" fill="#1f2937"/></svg>
<div style="left:1461.20px;top:235.00px;font-family:'Liberation Sans', sans-serif;font-size:15.4px;line-height:15.4px;font-weight:bold;color:#1f2937;letter-spacing:-0.300px;transform:scaleX(0.9552);transform-origin:0.00px 0;">Planned Activities</div>
<div style="left:1591px;top:235px;width:23px;height:17px;background:#00a23a;border-radius:9px;"></div>
<div style="left:1599.50px;top:238.00px;font-family:'Liberation Sans', sans-serif;font-size:11.5px;line-height:11.5px;font-weight:normal;color:#ffffff;letter-spacing:0.000px;">1</div>
<div style="left:1209px;top:286px;width:288px;height:1px;background:#d8dadd;"></div>
<div style="left:1559px;top:286px;width:283px;height:1px;background:#d8dadd;"></div>
<div style="left:1513.80px;top:279.00px;font-family:'Liberation Sans', sans-serif;font-size:14.4px;line-height:14.4px;font-weight:normal;color:#374151;letter-spacing:-0.300px;-webkit-text-stroke:0.45px #374151;">Files</div>
<div style="left:1213px;top:317px;width:100px;height:100px;background:#f8cc00;"></div>
<svg style="position:absolute;left:1213px;top:317px;" width="100" height="100" viewBox="0 0 100 100"><g fill="none" stroke="#5a6072" stroke-width="1.5"><path d="M13.8 42.2V55M13.8 47.5Q14.5 42.6 20.6 42.6"/><path d="M21 48.7H32.9A5.95 6.55 0 1 0 31.3 53.3"/><ellipse cx="41.2" cy="48.75" rx="5.6" ry="6.4"/><path d="M46.6 42.2V55M51.1 37.3V55M55.6 42.2V55M55.6 46.6A4.1 4.3 0 0 1 63.8 46.6V55M63.8 46.6A4.4 4.3 0 0 1 72.6 46.6V55"/><path d="M75.2 48.7H87.3A6.05 6.55 0 1 0 85.7 53.3"/></g></svg>
<div style="left:1213px;top:425px;width:141px;height:50px;background:#dcdee2;border-radius:4px;"></div>
<div style="left:1220px;top:430px;width:32px;height:35px;background:#ffffff;border:2px solid #c9211c;border-radius:3.5px;"></div>
<svg style="position:absolute;left:1222px;top:432px;" width="28" height="31" viewBox="0 0 28 31"><path d="M28 0L0 31h28z" fill="#f7e4e4"/><g fill="none" stroke="#c9211c" stroke-width="1.3"><ellipse cx="13.5" cy="8.6" rx="1.3" ry="2.9"/><ellipse cx="20.3" cy="17.4" rx="2.7" ry="1.2" transform="rotate(12 20.3 17.4)"/><ellipse cx="8.1" cy="21.6" rx="2.8" ry="1.2" transform="rotate(-38 8.1 21.6)"/><path d="M13.5 11.4L10.2 19.6L17.6 16.9Z"/></g></svg>
<div style="left:1263.20px;top:433.00px;font-family:'Liberation Sans', sans-serif;font-size:14.6px;line-height:14.6px;font-weight:normal;color:#374151;letter-spacing:0.206px;">bill1.pdf</div>
<div style="left:1263.20px;top:455.00px;font-family:'Liberation Sans', sans-serif;font-size:12.6px;line-height:12.6px;font-weight:normal;color:#374151;letter-spacing:-0.300px;transform:scaleX(0.9472);transform-origin:0.00px 0;">PDF</div>
<svg style="position:absolute;left:1331px;top:431px;" width="12" height="12" viewBox="0 0 12 12"><path d="M0.6 2.7h10.8" stroke="#1f2937" stroke-width="1.4"/><path d="M3.7 2.4V0.9h4.6v1.5" fill="none" stroke="#1f2937" stroke-width="1.1"/><path d="M2.3 3.4h7.4v8.1H2.3z" fill="none" stroke="#1f2937" stroke-width="1.4"/><path d="M4.8 4.2v6.6M7.2 4.2v6.6" stroke="#1f2937" stroke-width="1"/></svg>
<svg style="position:absolute;left:1330px;top:455px;" width="14" height="12" viewBox="0 0 14 12"><path d="M5.5 0h3v5.2h2.6L7 9.3 2.9 5.2h2.6z" fill="#1f2937"/><path d="M0 8.3h4.2L7 11.1l2.8-2.8H14V12H0z" fill="#1f2937"/><rect x="10.2" y="9.8" width="1" height="1" fill="#dcdee2"/><rect x="12" y="9.8" width="1" height="1" fill="#dcdee2"/></svg>
<div style="left:1358px;top:425px;width:175px;height:50px;background:#dcdee2;border-radius:4px;"></div>
<div style="left:1365px;top:430px;width:32px;height:35px;background:#ffffff;border:2px solid #a39600;border-radius:3.5px;"></div>
<svg style="position:absolute;left:1367px;top:432px;" width="28" height="31" viewBox="0 0 28 31"><path d="M28 0L0 31h28z" fill="#f6f5e4"/><g fill="#a39600"><rect x="9.2" y="0" width="2.6" height="2.2"/><rect x="9.2" y="5.2" width="2.6" height="2.2"/><rect x="9.2" y="9.6" width="2.6" height="2.2"/><rect x="9.2" y="14" width="2.6" height="2.2"/><rect x="6.6" y="2.8" width="2.4" height="2.2"/><rect x="6.6" y="7.2" width="2.4" height="2.2"/><rect x="6.6" y="11.7" width="2.4" height="2.2"/><rect x="6.6" y="16" width="2.4" height="2.2"/><path d="M6.9 17.3h4.9l1.5 6.4a3.95 3.95 0 0 1-7.9 0z"/></g><ellipse cx="9.3" cy="24.6" rx="2.1" ry="1.5" fill="#fff"/></svg>
<div style="left:1408.80px;top:433.00px;font-family:'Liberation Sans', sans-serif;font-size:14.6px;line-height:14.6px;font-weight:normal;color:#374151;letter-spacing:-0.145px;">education.zip</div>
<div style="left:1408.80px;top:455.00px;font-family:'Liberation Sans', sans-serif;font-size:12.6px;line-height:12.6px;font-weight:normal;color:#374151;letter-spacing:-0.300px;transform:scaleX(0.9471);transform-origin:0.00px 0;">ZIP</div>
<svg style="position:absolute;left:1509px;top:431px;" width="12" height="12" viewBox="0 0 12 12"><path d="M0.6 2.7h10.8" stroke="#1f2937" stroke-width="1.4"/><path d="M3.7 2.4V0.9h4.6v1.5" fill="none" stroke="#1f2937" stroke-width="1.1"/><path d="M2.3 3.4h7.4v8.1H2.3z" fill="none" stroke="#1f2937" stroke-width="1.4"/><path d="M4.8 4.2v6.6M7.2 4.2v6.6" stroke="#1f2937" stroke-width="1"/></svg>
<svg style="position:absolute;left:1508px;top:455px;" width="14" height="12" viewBox="0 0 14 12"><path d="M5.5 0h3v5.2h2.6L7 9.3 2.9 5.2h2.6z" fill="#1f2937"/><path d="M0 8.3h4.2L7 11.1l2.8-2.8H14V12H0z" fill="#1f2937"/><rect x="10.2" y="9.8" width="1" height="1" fill="#dcdee2"/><rect x="12" y="9.8" width="1" height="1" fill="#dcdee2"/></svg>
<svg style="position:absolute;left:1483px;top:489px;" width="13" height="12" viewBox="0 0 13 12"><rect x="0" y="0" width="12.5" height="12" rx="2" fill="#017e84"/><path d="M6.25 2.5v7M2.75 6h7" stroke="#fff" stroke-width="2"/></svg>
<div style="left:1499.10px;top:488.00px;font-family:'Liberation Sans', sans-serif;font-size:14.8px;line-height:14.8px;font-weight:normal;color:#017e84;letter-spacing:0.156px;-webkit-text-stroke:0.45px #017e84;">Attach files</div>
<svg style="position:absolute;left:1433px;top:521px;" width="14" height="12" viewBox="0 0 14 12"><path d="M5.5 0h3v5.2h2.6L7 9.3 2.9 5.2h2.6z" fill="#017e84"/><path d="M0 8.3h4.2L7 11.1l2.8-2.8H14V12H0z" fill="#017e84"/><rect x="10.2" y="9.8" width="1" height="1" fill="#f9fafb"/><rect x="12" y="9.8" width="1" height="1" fill="#f9fafb"/></svg>
<div style="left:1450.10px;top:521.00px;font-family:'Liberation Sans', sans-serif;font-size:14.4px;line-height:14.4px;font-weight:normal;color:#017e84;letter-spacing:0.296px;-webkit-text-stroke:0.45px #017e84;">Download All Attachments</div>
<div style="left:1225px;top:585px;width:267px;height:1px;background:#d8dadd;"></div>
<div style="left:1564px;top:585px;width:268px;height:1px;background:#d8dadd;"></div>
<div style="left:1509.10px;top:578.00px;font-family:'Liberation Sans', sans-serif;font-size:14.6px;line-height:14.6px;font-weight:normal;color:#5f6673;letter-spacing:-0.063px;-webkit-text-stroke:0.45px #5f6673;">Today</div>
<svg style="position:absolute;left:1225px;top:614px;" width="36" height="36" viewBox="0 0 36 36"><defs><linearGradient id="ob" x1="0" y1="0" x2="1" y2="1"><stop offset="0" stop-color="#b569b8"/><stop offset="0.5" stop-color="#7a3d70"/><stop offset="1" stop-color="#4f2344"/></linearGradient><radialGradient id="hd" cx="0.4" cy="0.35" r="0.7"><stop offset="0" stop-color="#ffffff"/><stop offset="0.7" stop-color="#e6e6e6"/><stop offset="1" stop-color="#a0a0a0"/></radialGradient></defs><rect width="36" height="36" rx="4" fill="url(#ob)"/><circle cx="18" cy="18" r="13.8" fill="url(#hd)"/><ellipse cx="21" cy="18" rx="8" ry="6.9" fill="#1b1b22"/><path d="M16.8 19.2a1.8 1.8 0 0 1 3.4 0M22.2 19.2a1.8 1.8 0 0 1 3.4 0" fill="none" stroke="#21c4c4" stroke-width="1.1"/></svg>
<div style="left:1267.20px;top:615.00px;font-family:'Liberation Sans', sans-serif;font-size:13.8px;line-height:13.8px;font-weight:normal;color:#1f2937;letter-spacing:0.839px;-webkit-text-stroke:0.45px #1f2937;">OdooBot</div>
<div style="left:1331.00px;top:616.00px;font-family:'Liberation Sans', sans-serif;font-size:12.6px;line-height:12.6px;font-weight:normal;color:#9ca3af;letter-spacing:0.203px;">- 42 minutes ago</div>
<div style="left:1267.20px;top:635.00px;font-family:'Liberation Sans', sans-serif;font-size:14.6px;line-height:14.6px;font-weight:normal;color:#374151;letter-spacing:-0.300px;transform:scaleX(0.9964);transform-origin:0.00px 0;">Sales Order created</div>
</body></html>
